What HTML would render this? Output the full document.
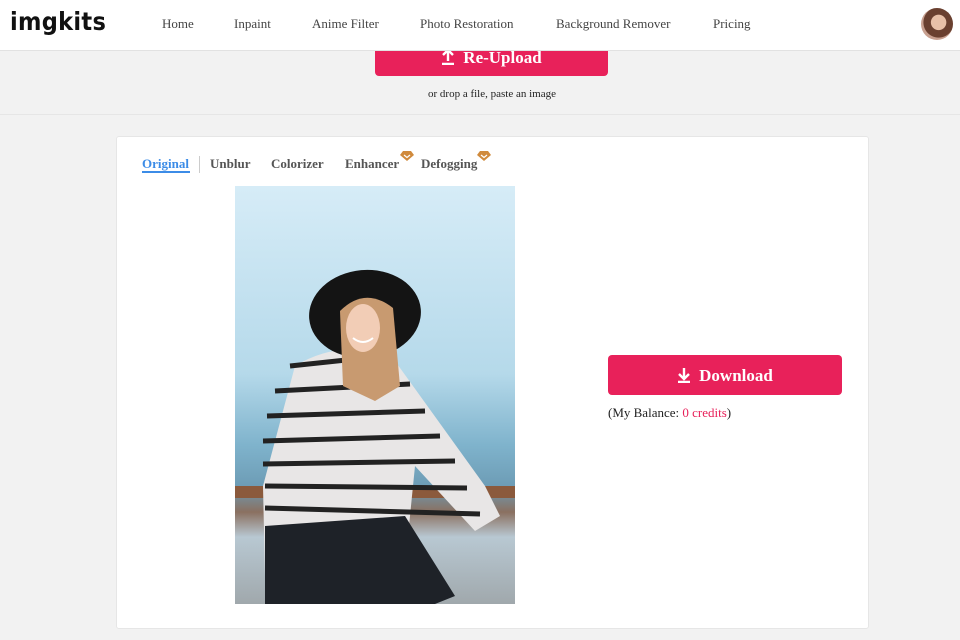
<!DOCTYPE html>
<html><head><meta charset="utf-8"><style>
*{margin:0;padding:0;box-sizing:border-box}
body{width:960px;height:640px;background:#f2f2f2;font-family:"Liberation Serif",serif;position:relative;overflow:hidden}
.hdr{position:absolute;top:0;left:0;width:960px;height:51px;background:#fff;border-bottom:1px solid #e2e2e2;z-index:2}
.logo{position:absolute;left:10px;top:7px;font-family:"DejaVu Sans Condensed","DejaVu Sans",sans-serif;font-weight:bold;font-size:25px;color:#111;letter-spacing:0.3px}
.nav a{position:absolute;top:16px;font-size:13px;color:#444;text-decoration:none}
.av{position:absolute;left:921px;top:8px;width:32px;height:32px;border-radius:50%;background:radial-gradient(circle at 55% 45%,#e8c0a8 0 30%,#6a4030 32% 60%,#c8a090 62%)}
.up{position:absolute;left:375px;top:38px;width:233px;height:38px;background:#e8215a;border-radius:4px;color:#fff;font-weight:bold;font-size:17px;text-align:center;line-height:40px}
.drop{position:absolute;top:88px;left:0;width:984px;text-align:center;font-size:11px;color:#222}
.band{position:absolute;top:114px;left:0;width:960px;height:1px;background:#e6e6e6}
.card{position:absolute;left:116px;top:136px;width:753px;height:493px;background:#fff;border:1px solid #e6e6e6;border-radius:3px}
.tab{position:absolute;top:156px;font-size:13px;font-weight:bold;color:#555}
.dia{position:absolute;width:14px;height:10px}
.dl{position:absolute;left:608px;top:355px;width:234px;height:40px;background:#e8215a;border-radius:4px;color:#fff;font-weight:bold;font-size:17px;text-align:center;line-height:41px}
.bal{position:absolute;left:608px;top:405px;font-size:13px;color:#222}
svg.ic{vertical-align:-2px;margin-right:8px}
</style></head><body>
<div class="up"><svg class="ic" width="14" height="16" viewBox="0 0 14 16"><path d="M7 1v11M2 6l5-5 5 5M1 15h12" stroke="#fff" stroke-width="2.4" fill="none"/></svg>Re-Upload</div>
<div class="hdr">
<div class="logo">imgkits</div>
<div class="nav"><a style="left:162px">Home</a><a style="left:234px">Inpaint</a><a style="left:312px">Anime Filter</a><a style="left:420px">Photo Restoration</a><a style="left:556px">Background Remover</a><a style="left:713px">Pricing</a></div>
<div class="av"></div>
</div>
<div class="drop">or drop a file, paste an image</div>
<div class="band"></div>
<div class="card"></div>
<div class="tab" style="left:142px;color:#3c8ce7">Original</div>
<div style="position:absolute;left:142px;top:171px;width:48px;height:2px;background:#3c8ce7"></div>
<div style="position:absolute;left:199px;top:156px;width:1px;height:17px;background:#ccc"></div>
<div class="tab" style="left:210px">Unblur</div>
<div class="tab" style="left:271px">Colorizer</div>
<div class="tab" style="left:345px">Enhancer</div>
<div class="tab" style="left:421px">Defogging</div>
<svg class="dia" style="left:400px;top:151px" viewBox="0 0 14 10"><path d="M3 0h8l3 4-7 6-7-6z" fill="#d08a3c"/><path d="M4 4l3 2.5 3-2.5" stroke="#fff" fill="none" stroke-width="1.2"/></svg>
<svg class="dia" style="left:477px;top:151px" viewBox="0 0 14 10"><path d="M3 0h8l3 4-7 6-7-6z" fill="#d08a3c"/><path d="M4 4l3 2.5 3-2.5" stroke="#fff" fill="none" stroke-width="1.2"/></svg>
<svg style="position:absolute;left:235px;top:186px" width="280" height="418" viewBox="0 0 280 418">
<defs><linearGradient id="s" x1="0" y1="0" x2="0" y2="1"><stop offset="0" stop-color="#d6ecf7"/><stop offset=".45" stop-color="#b5d9ea"/><stop offset=".62" stop-color="#7fb3cc"/><stop offset=".72" stop-color="#6d9cb5"/><stop offset=".78" stop-color="#8a7060"/><stop offset=".84" stop-color="#b8c8d2"/><stop offset="1" stop-color="#a0a8ac"/></linearGradient></defs>
<rect width="280" height="418" fill="url(#s)"/>
<rect x="0" y="300" width="280" height="12" fill="#8b5a3c"/>
<path d="M60 180 Q110 150 160 175 L250 300 L265 330 L240 345 L180 280 L170 380 L110 395 L30 390 L28 300 Z" fill="#e8e6e6"/>
<g stroke="#222" stroke-width="5"><path d="M55 180 L130 172"/><path d="M40 205 L175 198"/><path d="M32 230 L190 225"/><path d="M28 255 L205 250"/><path d="M28 278 L220 275"/><path d="M30 300 L232 302"/><path d="M30 322 L245 328"/></g>
<path d="M30 340 L170 330 L220 410 L200 418 L30 418 Z" fill="#1e2228"/>
<ellipse cx="130" cy="128" rx="56" ry="44" fill="#141414" transform="rotate(-5 130 128)"/>
<path d="M105 125 Q130 100 158 122 L165 200 L140 215 L108 200 Z" fill="#c89a70"/>
<ellipse cx="128" cy="142" rx="17" ry="24" fill="#f2cdb6"/>
<path d="M118 152 Q128 160 138 152" stroke="#fff" stroke-width="2" fill="none"/>
</svg>
<div class="dl"><svg class="ic" width="14" height="16" viewBox="0 0 14 16"><path d="M7 1v10M2 7l5 5 5-5M1 15h12" stroke="#fff" stroke-width="2.4" fill="none"/></svg>Download</div>
<div class="bal">(My Balance: <span style="color:#e8215a">0 credits</span>)</div>
</body></html>
